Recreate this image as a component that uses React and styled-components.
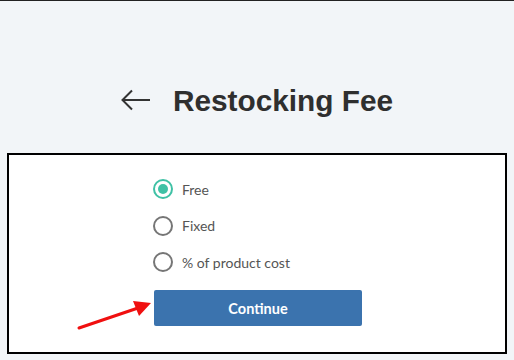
import { useState } from "react";
import styled, { createGlobalStyle } from "styled-components";

const GlobalStyle = createGlobalStyle`
    html, body {
        margin: 0;
        padding: 0;
        background: #F2F5F8;
    }
    * {
        box-sizing: border-box;
    }
`;

const Page = styled.div`
    width: 514px;
    height: 360px;
    display: flex;
    flex-direction: column;
    background: #F2F5F8;
    border-top: 1px solid #222;
    font-family: Lato, "Open Sans", sans-serif;
`;

const Header = styled.header`
    height: 152px;
    padding-top: 82px;
    display: flex;
    justify-content: center;
    align-items: flex-start;
    gap: 22px;
`;

const BackButton = styled.button`
    margin-top: 6px;
    padding: 0;
    border: none;
    background: none;
    display: flex;
    cursor: pointer;
`;

const Title = styled.h1`
    margin: 0;
    color: #2F2F2F;
    font-family: "Liberation Sans", Arial, sans-serif;
    font-size: 29.8px;
    font-weight: 700;
    line-height: 36px;
`;

const Card = styled.section`
    margin-left: 7px;
    width: 500px;
    height: 201px;
    border: 2px solid #000;
    background: #FFF;
    display: flex;
    justify-content: center;
    padding-top: 24px;
`;

const Form = styled.div`
    width: 208px;
    display: flex;
    flex-direction: column;
    position: relative;
`;

const Options = styled.div`
    display: flex;
    flex-direction: column;
    gap: 16.5px;
`;

const OptionRow = styled.label`
    height: 20px;
    display: flex;
    align-items: center;
    gap: 9px;
    color: #555;
    font-size: 14px;
    font-weight: 400;
    cursor: pointer;
`;

const Radio = styled.span`
    width: 20px;
    height: 20px;
    border-radius: 50%;
    border: 2px solid ${p => (p.$checked ? "#3FC1A5" : "#767676")};
    display: flex;
    align-items: center;
    justify-content: center;
    &::after {
        content: "";
        width: 10px;
        height: 10px;
        border-radius: 50%;
        background: ${p => (p.$checked ? "#3FC1A5" : "transparent")};
    }
`;

const ContinueButton = styled.button`
    margin-top: 18px;
    margin-left: 1px;
    width: 208px;
    height: 36px;
    border: none;
    border-radius: 2px;
    background: #3B73AE;
    color: #FFF;
    font-family: Lato, "Open Sans", sans-serif;
    font-size: 14.5px;
    font-weight: 700;
    cursor: pointer;
`;

const Pointer = styled.svg`
    position: absolute;
    left: -77px;
    top: 120px;
`;

const options = ["Free", "Fixed", "% of product cost"];

export default function App() {
    const [fee, setFee] = useState("Free");
    return (
        <>
            <GlobalStyle />
            <Page>
                <Header>
                    <BackButton aria-label="Back">
                        <svg width="30" height="22" viewBox="0 0 30 22" fill="none">
                            <path d="M29 11H2M11 1.5L1.5 11L11 20.5" stroke="#333" strokeWidth="2" />
                        </svg>
                    </BackButton>
                    <Title>Restocking Fee</Title>
                </Header>
                <Card>
                    <Form>
                        <Options>
                            {options.map(o => (
                                <OptionRow key={o} onClick={() => setFee(o)}>
                                    <Radio $checked={fee === o} />
                                    {o}
                                </OptionRow>
                            ))}
                        </Options>
                        <ContinueButton>Continue</ContinueButton>
                        <Pointer width="78" height="32" viewBox="0 0 78 32">
                            <path d="M3 29L62 9" stroke="#F01010" strokeWidth="3" strokeLinecap="round" />
                            <path d="M75 4L57 2L63 17Z" fill="#F01010" />
                        </Pointer>
                    </Form>
                </Card>
            </Page>
        </>
    );
}
